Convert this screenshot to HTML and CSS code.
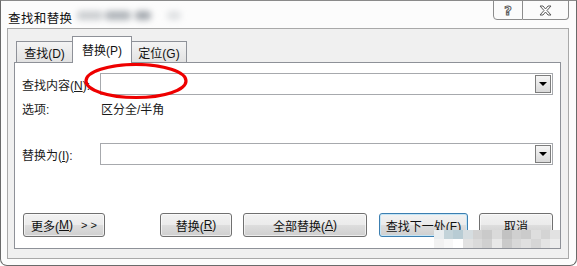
FILE: index.html
```html
<!DOCTYPE html>
<html lang="zh-CN">
<head>
    <meta charset="UTF-8">
    <title>查找和替换</title>
    <link rel="stylesheet" href="styles.css">
</head>
<body>
    <div class="window">
        <div class="titlebar">
            <span class="title">查找和替换</span>
            <span class="title-blur">
                <i class="blob b1"></i><i class="blob b2"></i><i class="blob b3"></i><i class="blob b4"></i>
            </span>
            <div class="caption">
                <span class="cap-btn help"><span class="help-glyph">?</span></span>
                <span class="cap-btn close">
                    <svg width="13" height="11" viewBox="0 0 13 11">
                        <path d="M1 1 H4 L6.5 4 L9 1 H12 L8 5.5 L12 10 H9 L6.5 7 L4 10 H1 L5 5.5 Z" fill="#fff" stroke="#5a5a5a" stroke-width="1"/>
                    </svg>
                </span>
            </div>
        </div>

        <div class="client">
            <div class="tabs">
                <span class="tab">查找(D)</span>
                <span class="tab active">替换(P)</span>
                <span class="tab">定位(G)</span>
            </div>

            <div class="panel">
                <div class="row">
                    <label class="label">查找内容(<u>N</u>):</label>
                    <div class="combo"><span class="combo-btn"><i class="arrow"></i></span></div>
                </div>
                <div class="row options">
                    <span class="label">选项:</span>
                    <span class="option-text">区分全/半角</span>
                </div>
                <div class="row replace-row">
                    <label class="label">替换为(<u>I</u>):</label>
                    <div class="combo"><span class="combo-btn"><i class="arrow"></i></span></div>
                </div>
                <div class="buttons">
                    <button class="btn more">更多(<u>M</u>)<span class="chev">&gt; &gt;</span></button>
                    <button class="btn replace">替换(<u>R</u>)</button>
                    <button class="btn replace-all">全部替换(<u>A</u>)</button>
                    <button class="btn find-next">查找下一处(F)</button>
                    <button class="btn cancel">取消</button>
                </div>
            </div>
        </div>

        <!-- annotation circle drawn over the dialog -->
        <svg class="mark" width="110" height="40" viewBox="0 0 110 40">
            <ellipse cx="55" cy="18" rx="50" ry="16.5" fill="none" stroke="#ee0000" stroke-width="3.2"/>
        </svg>

        <!-- pixelated watermark -->
        <div class="watermark">
            <i style="background:#e9edef"></i><i style="background:#c3d3d9"></i><i style="background:#b8ccd4"></i><i style="background:#d6dde0"></i><i style="background:#d2d2d2"></i><i style="background:#cacaca"></i><i style="background:#dadada"></i><i style="background:#c2c2c2"></i><i style="background:#d0d0d0"></i><i style="background:#cbcbcb"></i><i style="background:#dedede"></i><i style="background:#d4d4d4"></i><i style="background:#e2e2e2"></i>
            <i style="background:#f2f2f2"></i><i style="background:#f8f8f8"></i><i style="background:#ffffff"></i><i style="background:#e2e2e2"></i><i style="background:#dadada"></i><i style="background:#d0d0d0"></i><i style="background:#e8e8e8"></i><i style="background:#cacaca"></i><i style="background:#d8d8d8"></i><i style="background:#e0e0e0"></i><i style="background:#d6d6d6"></i><i style="background:#e4e4e4"></i><i style="background:#ececec"></i>
        </div>
    </div>
</body>
</html>
```

FILE: styles.css
```css
* {
    margin: 0;
    padding: 0;
    box-sizing: border-box;
}

body {
    background: #fff;
    font-family: 'Liberation Sans', 'Noto Sans CJK SC', sans-serif;
    font-size: 12px;
    color: #1a1a1a;
}

u {
    text-decoration: underline;
    text-underline-offset: 1px;
}

/* Window frame */
.window {
    position: relative;
    width: 577px;
    height: 266px;
    border: 1px solid #6a6a6a;
    border-top-color: #8a8a8a;
    border-radius: 0 0 7px 7px;
    background: #fcfcfc;
    display: flex;
    flex-direction: column;
    overflow: hidden;
}

.titlebar {
    height: 27px;
    display: flex;
    align-items: flex-start;
    padding-left: 7px;
}

.title {
    margin-top: 7px;
    font-size: 12.5px;
    letter-spacing: 0.4px;
    color: #111;
}

.title-blur {
    display: flex;
    align-items: center;
    margin-top: 10px;
    margin-left: 4px;
    filter: blur(3px);
}

.blob {
    display: inline-block;
    height: 9px;
    border-radius: 4px;
    background: #8d949b;
}

.b1 { width: 26px; opacity: 0.45; }
.b2 { width: 26px; margin-left: 2px; opacity: 0.7; }
.b3 { width: 16px; margin-left: 4px; opacity: 0.8; }
.b4 { width: 14px; margin-left: 16px; opacity: 0.25; }

.caption {
    margin-left: auto;
    margin-right: 7px;
    margin-top: -1px;
    display: flex;
}

.cap-btn {
    height: 20px;
    border: 1px solid #8c8c8c;
    background: #fbfbfb;
    display: flex;
    align-items: center;
    justify-content: center;
}

.help {
    width: 30px;
    border-radius: 0 0 0 4px;
}

.close {
    width: 46px;
    border-left: none;
    border-radius: 0 0 4px 0;
}

.help-glyph {
    font-family: 'DejaVu Sans', sans-serif;
    font-weight: bold;
    font-size: 13px;
    color: #fff;
    -webkit-text-stroke: 1px #5a5a5a;
    line-height: 1;
}

/* Client area */
.client {
    flex: 1;
    margin: 0 7px 6px 6px;
    border: 1px solid #a9a9a9;
    background: #f0f0f0;
    display: flex;
    flex-direction: column;
    padding: 7px 7px 9px 6px;
}

.tabs {
    display: flex;
    align-items: flex-end;
    padding-left: 2px;
    height: 26px;
    position: relative;
    z-index: 1;
}

.tab {
    height: 21px;
    border: 1px solid #8e9198;
    border-bottom: none;
    background: linear-gradient(#f4f4f4, #e2e2e2);
    display: flex;
    align-items: center;
    justify-content: center;
    color: #111;
}

.tab:first-child {
    width: 56px;
    border-right: none;
}

.tab.active {
    width: 60px;
    height: 27px;
    margin-bottom: -1px;
    background: #fff;
    padding-bottom: 2px;
}

.tab:last-child {
    width: 55px;
    border-left: none;
}

.panel {
    flex: 1;
    background: #fff;
    border: 1px solid #8e9198;
    padding: 10px 7px 0 7px;
    display: flex;
    flex-direction: column;
}

.row {
    display: flex;
    align-items: center;
}

.label {
    width: 78px;
    flex: none;
    color: #1a1a1a;
}

.combo {
    flex: 1;
    height: 22px;
    border: 1px solid #a7a9ad;
    background: #fff;
    display: flex;
    justify-content: flex-end;
    padding: 1px;
}

.combo-btn {
    width: 16px;
    border: 1px solid #7d7d7d;
    background: linear-gradient(#f6f6f6, #d9d9d9);
    display: flex;
    align-items: center;
    justify-content: center;
}

.arrow {
    width: 0;
    height: 0;
    border-left: 4px solid transparent;
    border-right: 4px solid transparent;
    border-top: 4px solid #000;
}

.options {
    margin-top: 6px;
    height: 14px;
}

.option-text {
    padding-left: 1px;
}

.replace-row {
    margin-top: 28px;
}

/* Bottom buttons */
.buttons {
    margin-top: 48px;
    display: flex;
    padding-left: 1px;
}

.btn {
    height: 24px;
    border: 1px solid #707070;
    border-radius: 3px;
    background: linear-gradient(#f2f2f2 0%, #ebebeb 48%, #dddddd 52%, #cfcfcf 100%);
    font: inherit;
    color: #111;
    display: flex;
    align-items: center;
    justify-content: center;
    box-shadow: inset 0 0 0 1px rgba(255, 255, 255, 0.6);
}

.more {
    width: 82px;
    margin-right: auto;
}

.chev {
    margin-left: 8px;
    font-size: 11px;
}

.replace {
    width: 72px;
}

.replace-all {
    width: 124px;
    margin-left: 11px;
}

.find-next {
    width: 89px;
    margin-left: 12px;
    border-color: #3c7fb1;
    box-shadow: inset 0 0 0 1px #c4e5f6;
}

.cancel {
    width: 74px;
    margin-left: 11px;
}

/* Overlays */
.mark {
    position: absolute;
    left: 80px;
    top: 62px;
}

.watermark {
    position: absolute;
    left: 433px;
    top: 229px;
    width: 126px;
    display: grid;
    grid-template-columns: repeat(13, 1fr);
    grid-auto-rows: 9px;
}

.watermark i {
    display: block;
}
```
